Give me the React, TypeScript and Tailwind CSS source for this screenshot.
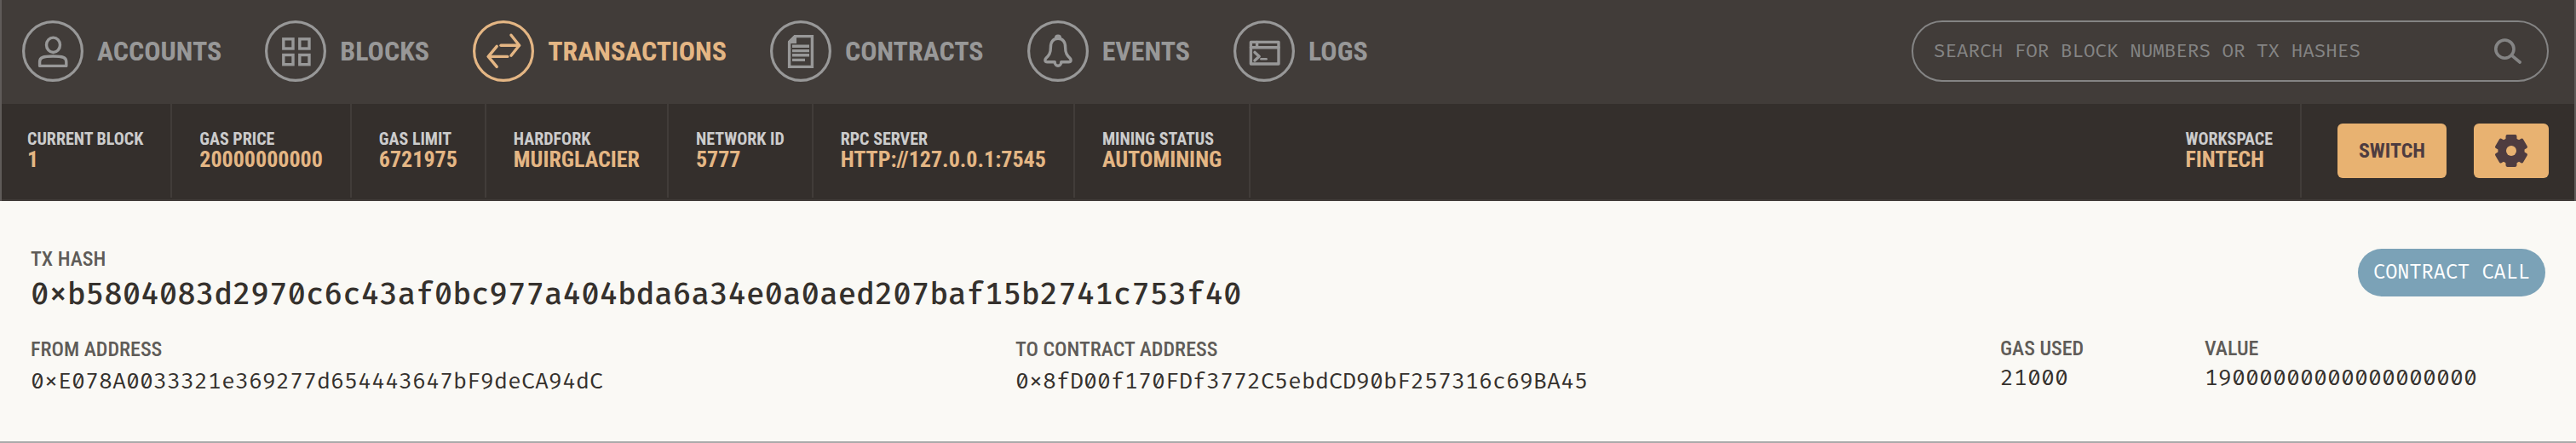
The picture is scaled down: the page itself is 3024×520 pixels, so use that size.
import type { ReactNode } from "react";

const sans = "font-['Roboto_Condensed','Roboto',sans-serif]";
const mono = "font-['Fira_Code','DejaVu_Sans_Mono',monospace]";

function AccountsIcon() {
  return (
    <>
      <ellipse cx="36.5" cy="28.8" rx="8" ry="8.7" />
      <path d="M20.6 53.4V48.5C20.6 43.6 24.5 42 36.2 42S51.8 43.6 51.8 48.5V53.4Z" strokeLinejoin="round" />
    </>
  );
}

function BlocksIcon() {
  return (
    <>
      <rect x="21.8" y="21.8" width="11.2" height="11.2" />
      <rect x="40.8" y="21.8" width="11.2" height="11.2" />
      <rect x="21.8" y="40.5" width="11.2" height="11.2" />
      <rect x="40.8" y="40.5" width="11.2" height="11.2" />
    </>
  );
}

function TransactionsIcon() {
  return (
    <g strokeLinecap="round" strokeLinejoin="round">
      <path d="M33 29.2H54.4" />
      <path d="M45 17.2L54.6 29.2L45 41.2" />
      <path d="M40.8 42.4H18.4" />
      <path d="M28.2 30.4L18.2 42.4L28.2 54.4" />
    </g>
  );
}

function ContractsIcon() {
  return (
    <>
      <path d="M22.6 25.5L29.3 18.6H49.4V54.4H22.6Z" />
      <path d="M21 27V24.4L28.6 17H31V27Z" fill="currentColor" stroke="none" />
      <path d="M26 30.3H46M26 35.6H46M26 40.8H46M26 46.4H41" />
    </>
  );
}

function EventsIcon() {
  return (
    <g strokeLinecap="round" strokeLinejoin="round">
      <path d="M33.6 20.4C33.6 17.4 38.4 17.4 38.4 20.4" />
      <path d="M32 48.8H23.4C20.4 48.8 20.2 46 22 44.2C25.4 41 27.4 38.6 27.4 31.4C27.4 25 30.6 21.2 36 21.2S44.6 25 44.6 31.4C44.6 38.6 46.6 41 50 44.2C51.8 46 51.6 48.8 48.6 48.8H40" />
      <path d="M32.2 49C32.2 54.6 39.8 54.6 39.8 49" />
    </g>
  );
}

function LogsIcon() {
  return (
    <g strokeLinecap="round" strokeLinejoin="round">
      <path d="M20.4 25.4H53V51H20.4Z" />
      <path d="M20.4 31.8H53M27.6 25.4V31.8" />
      <path d="M25 37.4L30.2 42.2L25 47" />
      <path d="M32.4 45.2H38.6" strokeWidth="2.6" />
    </g>
  );
}

type NavItem = { label: string; icon: ReactNode; active?: boolean };

const navItems: NavItem[] = [
  { label: "ACCOUNTS", icon: <AccountsIcon /> },
  { label: "BLOCKS", icon: <BlocksIcon /> },
  { label: "TRANSACTIONS", icon: <TransactionsIcon />, active: true },
  { label: "CONTRACTS", icon: <ContractsIcon /> },
  { label: "EVENTS", icon: <EventsIcon /> },
  { label: "LOGS", icon: <LogsIcon /> },
];

const stats = [
  { label: "CURRENT BLOCK", value: "1" },
  { label: "GAS PRICE", value: "20000000000" },
  { label: "GAS LIMIT", value: "6721975" },
  { label: "HARDFORK", value: "MUIRGLACIER" },
  { label: "NETWORK ID", value: "5777" },
  { label: "RPC SERVER", value: "HTTP://127.0.0.1:7545" },
  { label: "MINING STATUS", value: "AUTOMINING" },
];

function NavLink({ label, icon, active }: NavItem) {
  return (
    <a
      href="#"
      aria-current={active ? "page" : undefined}
      className={`flex items-center gap-4 ${active ? "text-[#e4b684]" : "text-[#989898]"}`}
    >
      <svg viewBox="0 0 72 72" className="size-[72px] shrink-0" fill="none" stroke="currentColor" strokeWidth="3.4" aria-hidden="true">
        <circle cx="36" cy="36" r="34.4" strokeWidth="3.2" />
        {icon}
      </svg>
      <span className="text-[32px] leading-10 font-bold">{label}</span>
    </a>
  );
}

function Stat({ label, value }: { label: string; value: string }) {
  return (
    <div className="border-r-2 border-[#413c39] px-8 pt-[30px] pb-8 font-bold whitespace-nowrap first:pl-[30px]">
      <dt className="text-[20px] leading-[22px] text-[#cccccc]">{label}</dt>
      <dd className="text-[26px] leading-[26px] text-[#e4b684]">{value}</dd>
    </div>
  );
}

function GearIcon() {
  return (
    <svg viewBox="-20 -20 40 40" className="size-10" aria-hidden="true">
      <g fill="#4e3c40">
        <circle r="15.6" />
        {[0, 60, 120, 180, 240, 300].map((angle) => (
          <rect key={angle} x="-6.5" y="-18.9" width="13" height="14" rx="1.8" transform={`rotate(${angle})`} />
        ))}
      </g>
      <circle r="6" fill="#e8b271" />
    </svg>
  );
}

function Field({ label, value }: { label: string; value: string }) {
  return (
    <div>
      <dt className="text-[24px] leading-[30px] font-medium text-[#5f5c58]">{label}</dt>
      <dd className={`mt-1 text-[26px] leading-[38px] ${mono}`}>{value}</dd>
    </div>
  );
}

function Amount({ label, value }: { label: string; value: string }) {
  return (
    <div>
      <dt className="text-[24px] leading-7 font-medium text-[#5f5c58]">{label}</dt>
      <dd className={`mt-0.5 text-[26px] leading-[38px] ${mono}`}>{value}</dd>
    </div>
  );
}

export default function App() {
  return (
    <div className={`bg-[#faf9f5] text-[#35312d] ${sans}`}>
      <header className="border-x-2 border-[#5f5b59]">
        <div className="flex items-center justify-between bg-[#413c39] pt-6 pr-[30px] pb-[26px] pl-6">
          <nav className="flex items-center gap-[51px]">
            {navItems.map((item) => (
              <NavLink key={item.label} {...item} />
            ))}
          </nav>
          <div className="flex h-[72px] w-[748px] items-center rounded-full border-2 border-[#848484] pr-[30px] pl-6 text-[#848484]">
            <input
              type="text"
              aria-label="Search for block numbers or tx hashes"
              placeholder="SEARCH FOR BLOCK NUMBERS OR TX HASHES"
              className={`min-w-0 flex-1 bg-transparent pt-0.5 text-[22px] leading-8 outline-none placeholder:text-[#848484] ${mono}`}
            />
            <svg viewBox="0 0 32 30" className="h-[30px] w-8" fill="none" stroke="currentColor" strokeWidth="3.6" strokeLinecap="round" aria-hidden="true">
              <circle cx="12.4" cy="12.6" r="10.6" />
              <path d="M20.6 20.2L30.1 28" />
            </svg>
          </div>
        </div>
        <div className="flex justify-between border-b-2 border-[#413c39] bg-[#342f2c] pb-0.5">
          <dl className="flex">
            {stats.map((stat) => (
              <Stat key={stat.label} {...stat} />
            ))}
          </dl>
          <div className="flex items-center gap-8 pr-[30px]">
            <dl className="mr-[10px]">
              <Stat label="WORKSPACE" value="FINTECH" />
            </dl>
            <button type="button" className="h-16 w-32 rounded-md bg-[#e8b271] text-[24px] leading-8 font-bold text-[#4e3c40]">
              SWITCH
            </button>
            <button type="button" aria-label="Settings" className="flex h-16 w-[88px] items-center justify-center rounded-md bg-[#e8b271]">
              <GearIcon />
            </button>
          </div>
        </div>
      </header>

      <main className="border-b-2 border-[#aaaaaa] px-9 pt-[53px] pb-[51px]">
        <div className="flex items-start justify-between">
          <div>
            <h2 className="text-[24px] leading-[30px] font-medium text-[#5f5c58]">TX HASH</h2>
            <p className={`mt-1 text-[35px] leading-[48px] font-medium ${mono}`}>
              0xb5804083d2970c6c43af0bc977a404bda6a34e0a0aed207baf15b2741c753f40
            </p>
          </div>
          <span className={`mt-[3px] flex h-14 w-[220px] items-center justify-center rounded-full bg-[#7ba2b7] text-[23px] leading-8 whitespace-nowrap text-white ${mono}`}>
            CONTRACT CALL
          </span>
        </div>
        <dl className="mt-6 grid grid-cols-[1fr_1fr_240px_400px]">
          <Field label="FROM ADDRESS" value="0xE078A0033321e369277d654443647bF9deCA94dC" />
          <Field label="TO CONTRACT ADDRESS" value="0x8fD00f170FDf3772C5ebdCD90bF257316c69BA45" />
          <Amount label="GAS USED" value="21000" />
          <Amount label="VALUE" value="19000000000000000000" />
        </dl>
      </main>
    </div>
  );
}
